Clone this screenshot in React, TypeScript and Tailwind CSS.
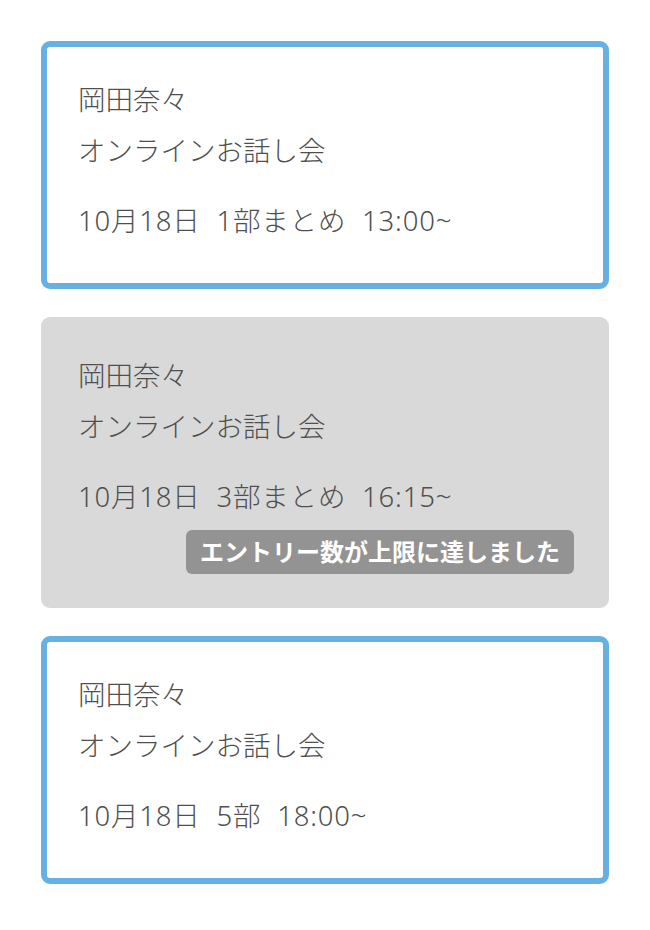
import React from 'react';

type Session = {
  name: string;
  event: string;
  schedule: string;
  full?: boolean;
};

const sessions: Session[] = [
  { name: '岡田奈々', event: 'オンラインお話し会', schedule: '10月18日  1部まとめ  13:00~' },
  { name: '岡田奈々', event: 'オンラインお話し会', schedule: '10月18日  3部まとめ  16:15~', full: true },
  { name: '岡田奈々', event: 'オンラインお話し会', schedule: '10月18日  5部  18:00~' },
];

const App: React.FC = () => {
  return (
    <div
      className="min-h-[930px] w-[650px] bg-white px-[41px] pt-[41px] flex flex-col gap-[28px] text-[#4f4f4f]"
      style={{ fontFamily: '"Noto Sans", "Noto Sans CJK JP", sans-serif' }}
    >
      {sessions.map((s, i) => (
        <div
          key={i}
          className={
            s.full
              ? 'rounded-[9px] border-[6px] border-transparent bg-[#d9d9d9] pl-[31px] pr-[29px] pt-[27px] pb-[28px]'
              : 'rounded-[9px] border-[6px] border-[#66b1e2] bg-white pl-[31px] pr-[29px] pt-[27px] pb-[37px]'
          }
        >
          <p className="text-[27.5px] leading-[51px] font-light">{s.name}</p>
          <p className="text-[27.5px] leading-[51px] font-light">{s.event}</p>
          <p className="mt-[19px] text-[27.5px] leading-[51px] font-light whitespace-pre tracking-[0.8px]">
            {s.schedule}
          </p>
          {s.full && (
            <div className="mt-[8px] flex justify-end">
              <span className="h-[44px] flex items-center rounded-[6px] bg-[#939393] px-[14px] text-[24px] font-semibold text-white">
                エントリー数が上限に達しました
              </span>
            </div>
          )}
        </div>
      ))}
    </div>
  );
};

export default App;
